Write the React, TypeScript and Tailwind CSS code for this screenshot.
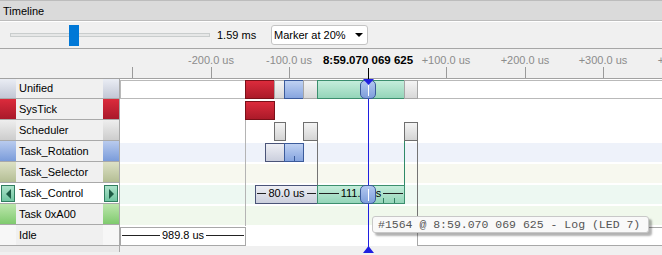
type Kind = 'red' | 'gray' | 'sched' | 'blue' | 'green' | 'slate' | 'idle'

const kinds: Record<Kind, string> = {
  red: 'bg-linear-to-b from-[#dc2b3c] to-[#ab1a29] border-[#7a1019]',
  gray: 'bg-linear-to-b from-[#f4f4f4] to-[#d8d8d8] border-[#a6a6a6]',
  sched: 'bg-linear-to-b from-[#f4f4f4] to-[#d4d4d4] border-[#6f6f6f]',
  blue: 'bg-linear-to-b from-[#bfd1f2] to-[#87a5df] border-[#3b5b9b]',
  green: 'bg-linear-to-b from-[#c4eddb] to-[#94d5b9] border-[#3c8f6e]',
  slate: 'bg-linear-to-b from-[#eeeff4] to-[#cbcfdd] border-[#4a5478]',
  idle: 'bg-white border-[#a8a8a8]',
}

const tickColor: Partial<Record<Kind, string>> = {
  blue: 'bg-[#3b5b9b]',
  green: 'bg-[#2f7d5f]',
}

type Bar = { x: number; w: number; kind: Kind; text?: string; ticks?: number[]; open?: boolean }
type Row = { name: string; swatch: string; band?: string; active?: boolean; pill?: number; bars: Bar[] }

const rows: Row[] = [
  {
    name: 'Unified',
    swatch: 'bg-linear-to-b from-[#eaedf4] to-[#c3c8d6]',
    band: 'bg-white border-y border-l border-[#b9b9b9]',
    pill: 240,
    bars: [
      { x: 125, w: 30, kind: 'red' },
      { x: 154, w: 11, kind: 'gray' },
      { x: 164, w: 20, kind: 'blue' },
      { x: 183, w: 15, kind: 'gray' },
      { x: 197, w: 88, kind: 'green' },
      { x: 284, w: 14, kind: 'gray' },
    ],
  },
  {
    name: 'SysTick',
    swatch: 'bg-linear-to-b from-[#dc2b3c] to-[#a9192a]',
    bars: [{ x: 125, w: 30, kind: 'red' }],
  },
  {
    name: 'Scheduler',
    swatch: 'bg-linear-to-b from-[#eeeeee] to-[#cdcdcd]',
    bars: [
      { x: 154, w: 12, kind: 'sched' },
      { x: 183, w: 15, kind: 'sched' },
      { x: 284, w: 14, kind: 'sched' },
    ],
  },
  {
    name: 'Task_Rotation',
    swatch: 'bg-linear-to-b from-[#b9cbee] to-[#7b9cda]',
    band: 'bg-[#eef2fa]',
    bars: [
      { x: 145, w: 20, kind: 'slate' },
      { x: 164, w: 20, kind: 'blue', ticks: [9] },
    ],
  },
  {
    name: 'Task_Selector',
    swatch: 'bg-linear-to-b from-[#dde1c6] to-[#b4be94]',
    band: 'bg-[#f7f8ef]',
    bars: [],
  },
  {
    name: 'Task_Control',
    swatch: 'bg-linear-to-b from-[#ace2ca] to-[#6fc5a1]',
    band: 'bg-[#edf8f2]',
    active: true,
    pill: 240,
    bars: [
      { x: 135, w: 63, kind: 'slate', text: '80.0 us' },
      { x: 197, w: 88, kind: 'green', text: '111.1 us', ticks: [65, 76] },
    ],
  },
  {
    name: 'Task 0xA00',
    swatch: 'bg-linear-to-b from-[#bce6ac] to-[#7fca6e]',
    band: 'bg-[#f0f8ec]',
    bars: [],
  },
  {
    name: 'Idle',
    swatch: 'bg-[#f7f7f7]',
    bars: [
      { x: 0, w: 126, kind: 'idle', text: '989.8 us' },
      { x: 297, w: 300, kind: 'idle', open: true },
    ],
  },
]

// connector lines between rows, timeline coords (x from 120, y from 79)
const links = [
  { x: 125, y: 41, h: 106, c: 'bg-[#b4b4b4]' },
  { x: 197, y: 62, h: 44, c: 'bg-[#747474]' },
  { x: 284, y: 62, h: 44, c: 'bg-[#2f8a68]' },
  { x: 297, y: 62, h: 85, c: 'bg-[#747474]' },
]

const ticks = [132, 211, 289, 446, 525, 603]
const labels: [number, string][] = [
  [211, '-200.0 us'],
  [289, '-100.0 us'],
  [446, '+100.0 us'],
  [525, '+200.0 us'],
  [603, '+300.0 us'],
  [682, '+400.0 us'],
]

function Swatch({ cls, arrow }: { cls: string; arrow?: 'left' | 'right' }) {
  if (!arrow) return <div className={`w-[16px] shrink-0 ${cls}`} />
  return (
    <div className="w-[16px] shrink-0 bg-white p-[1px] pb-[1px] pt-[2px]">
      <div className={`flex h-full items-center justify-center border border-[#2f7d5f] ${cls}`}>
        <svg width="5" height="10" viewBox="0 0 5 10">
          <polygon points={arrow === 'left' ? '5,0 5,10 0,5' : '0,0 0,10 5,5'} fill="#1d5b45" />
        </svg>
      </div>
    </div>
  )
}

function Span({ text }: { text: string }) {
  return (
    <div className="flex h-full items-center px-[1px] pb-[2px]">
      <div className="h-px flex-1 bg-[#222]" />
      <span className="px-[2px] leading-[13px]">{text}</span>
      <div className="h-px flex-1 bg-[#222]" />
    </div>
  )
}

function Tracks() {
  return (
    <div className="relative shrink-0">
      {rows.map((r, i) => {
        const top = i === 0 ? 'top-[1px]' : 'top-[2px]'
        return (
          <div key={r.name} className={`flex ${i === 0 ? 'h-[20px]' : 'h-[21px]'}`}>
            <div className="flex w-[120px] shrink-0 border-r border-b border-[#a9a9a9]">
              <Swatch cls={r.swatch} arrow={r.active ? 'left' : undefined} />
              <div className={`flex flex-1 items-center pl-[3px] ${r.active ? 'bg-white' : 'bg-[#f0f0f0]'}`}>
                {r.name}
              </div>
              <Swatch cls={r.swatch} arrow={r.active ? 'right' : undefined} />
            </div>
            <div className="relative flex-1 bg-white">
              {r.band && <div className={`absolute inset-x-0 ${top} h-[19px] ${r.band}`} />}
              {r.bars.map((b) => (
                <div
                  key={b.x}
                  className={`absolute ${top} h-[19px] border ${kinds[b.kind]} ${b.open ? 'border-r-0' : ''}`}
                  style={{ left: b.x, width: b.w }}
                >
                  {b.text && <Span text={b.text} />}
                  {b.ticks?.map((t) => (
                    <div
                      key={t}
                      className={`absolute bottom-0 h-[5px] w-px ${tickColor[b.kind]}`}
                      style={{ left: t }}
                    />
                  ))}
                </div>
              ))}
              {r.pill !== undefined && (
                <div
                  className={`absolute z-20 ${top} h-[19px] w-[16px] rounded-[5px] border border-[#3b5b9b] bg-linear-to-b from-[#b3c8ef] to-[#7e9edb]`}
                  style={{ left: r.pill }}
                >
                  <div className="absolute left-[7px] top-[3px] bottom-[2px] w-px bg-white" />
                </div>
              )}
            </div>
          </div>
        )
      })}
      <div className="pointer-events-none absolute inset-y-0 left-[120px] right-0">
        {links.map((l) => (
          <div key={l.x} className={`absolute w-px ${l.c}`} style={{ left: l.x, top: l.y, height: l.h }} />
        ))}
      </div>
    </div>
  )
}

export default function App() {
  return (
    <div className="relative flex h-[255px] w-[662px] flex-col overflow-hidden bg-[#f0f0f0] font-['Liberation_Sans',Arial,sans-serif] text-[11px] text-black">
      <div className="h-[21px] shrink-0 border-y border-[#bcbcbc] bg-[#dadada] pl-[3px] pt-[4px] leading-[13px]">
        Timeline
      </div>

      <div className="flex h-[28px] shrink-0 items-center border-y border-t-white border-b-[#a6a6a6]">
        <div className="relative ml-[10px] flex h-[21px] w-[200px] items-center">
          <div className="h-[4px] w-full border border-[#c9cdcd] bg-[#e6e7e7]" />
          <div className="absolute left-[59px] top-0 h-[21px] w-[10px] bg-[#0078d7]" />
        </div>
        <span className="ml-[7px] w-[54px] leading-[13px]">1.59 ms</span>
        <div className="flex h-[20px] w-[97px] items-center justify-between rounded-[3px] border border-[#c4c4c4] bg-white pl-[2px] pr-[4px]">
          <span className="leading-[13px]">Marker at 20%</span>
          <svg width="8" height="4" viewBox="0 0 8 4">
            <polygon points="0,0 8,0 4,4" fill="#000" />
          </svg>
        </div>
      </div>

      <div className="relative h-[30px] shrink-0 border-b border-[#a2a2a2]">
        {ticks.map((x) => (
          <div key={x} className="absolute top-[18px] bottom-0 w-px bg-[#9a9a9a]" style={{ left: x }} />
        ))}
        {labels.map(([x, t]) => (
          <div
            key={t}
            className="absolute top-[5px] w-[80px] text-center leading-[13px] text-[#8c8c8c]"
            style={{ left: x - 40 }}
          >
            {t}
          </div>
        ))}
        <div className="absolute top-[5px] left-[308px] w-[120px] text-center text-[11.5px] font-bold leading-[13px]">
          8:59.070 069 625
        </div>
      </div>

      <Tracks />

      <div className="flex flex-1">
        <div className="h-[6px] w-[120px] border-r border-[#a9a9a9] bg-[#e9e9e9]" />
      </div>

      {/* marker */}
      <div className="absolute left-[368px] top-[68px] h-[11px] w-px bg-black" />
      <div className="absolute left-[368px] top-[79px] z-10 h-[168px] w-px bg-[#1f1fe0]" />
      <svg className="absolute left-[363px] top-[79px] z-30" width="11" height="6" viewBox="0 0 11 6">
        <polygon points="0,0 11,0 5.5,6" fill="#1f1fe0" />
      </svg>
      <svg className="absolute left-[363px] top-[246px] z-30" width="11" height="7" viewBox="0 0 11 7">
        <polygon points="5.5,0 11,7 0,7" fill="#1f1fe0" />
      </svg>

      <div className="absolute left-[372px] top-[216px] z-30 flex h-[17px] w-[277px] items-center rounded-[3px] border border-[#c8c8c8] bg-[#f9f9f9] pl-[5px] font-['Liberation_Mono','Courier_New',monospace] text-[11.5px] text-[#555] shadow-[3px_3px_2px_rgba(0,0,0,0.3)]">
        #1564 @ 8:59.070 069 625 - Log (LED 7)
      </div>
    </div>
  )
}
